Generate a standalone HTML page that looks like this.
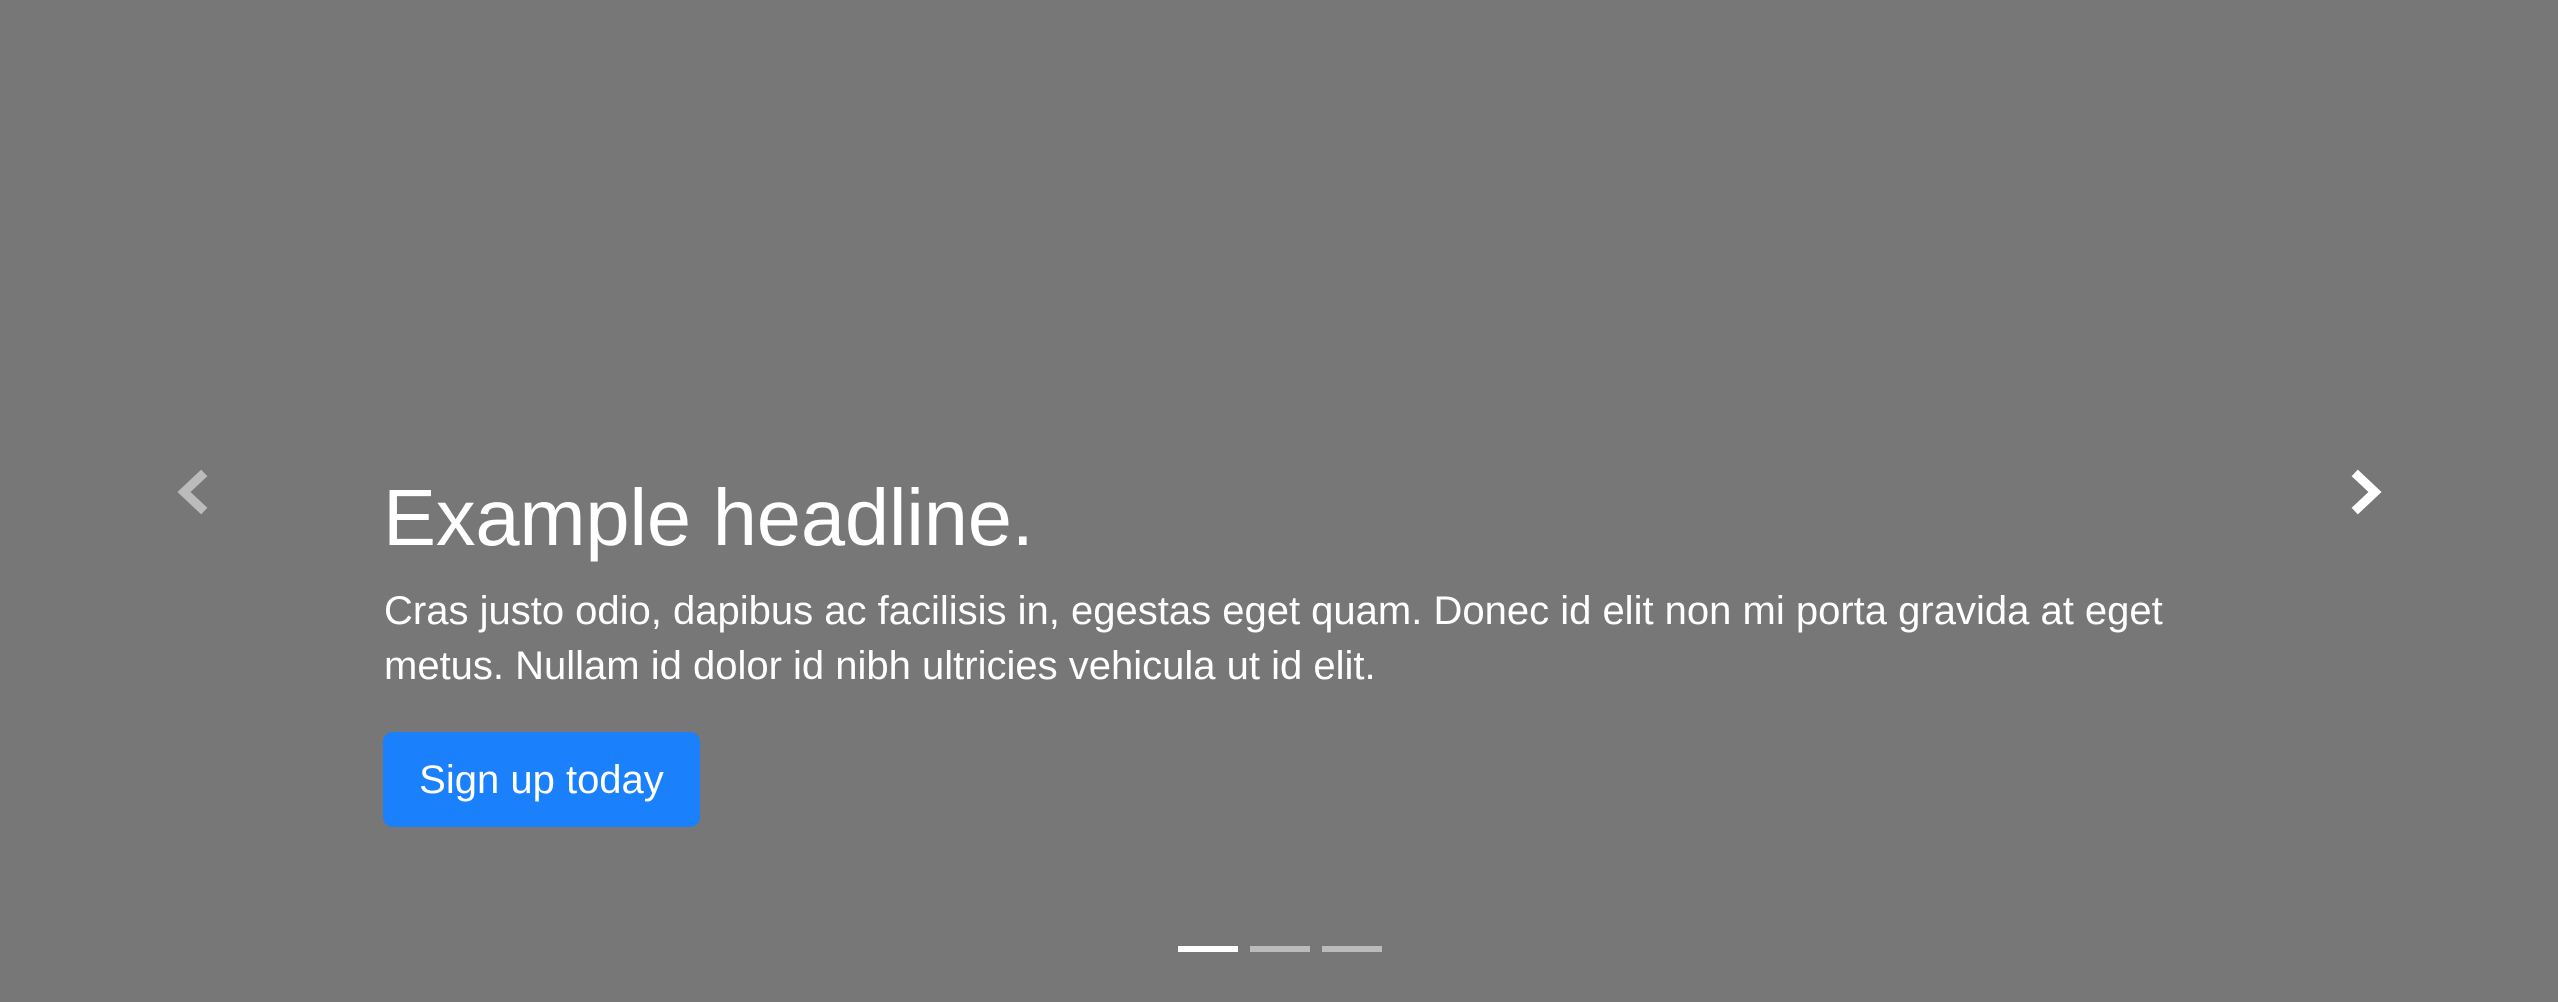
<!DOCTYPE html>
<html><head><meta charset="utf-8"><style>
html,body{margin:0;padding:0;}
body{width:2558px;height:1002px;background:#777;position:relative;overflow:hidden;font-family:"Liberation Sans",Arial,sans-serif;color:#fff;}
h1{position:absolute;left:383px;top:472px;margin:0;font-size:79.5px;font-weight:500;line-height:92px;white-space:nowrap;letter-spacing:-0.2px;}
p{position:absolute;left:384px;top:584px;margin:0;font-size:40px;line-height:55px;white-space:nowrap;}
.btn{position:absolute;left:383px;top:732px;width:317px;height:95px;background:#1a80fb;border-radius:10px;font-size:40px;line-height:97px;text-align:center;}
.ind{position:absolute;top:946px;width:60px;height:6px;background:#fff;}
</style></head><body>
<svg width="2558" height="1002" style="position:absolute;left:0;top:0">
<polyline points="201,476 184,492 201,508" fill="none" stroke="#fff" stroke-opacity="0.5" stroke-width="9" stroke-linecap="square" stroke-linejoin="miter"/>
<polyline points="2358,476 2375,492 2358,508" fill="none" stroke="#fff" stroke-width="9" stroke-linecap="square" stroke-linejoin="miter"/>
</svg>
<h1>Example headline.</h1>
<p>Cras justo odio, dapibus ac facilisis in, egestas eget quam. Donec id elit non mi porta gravida at eget<br>metus. Nullam id dolor id nibh ultricies vehicula ut id elit.</p>
<div class="btn">Sign up today</div>
<div class="ind" style="left:1178px"></div>
<div class="ind" style="left:1250px;opacity:.5"></div>
<div class="ind" style="left:1322px;opacity:.5"></div>
</body></html>
